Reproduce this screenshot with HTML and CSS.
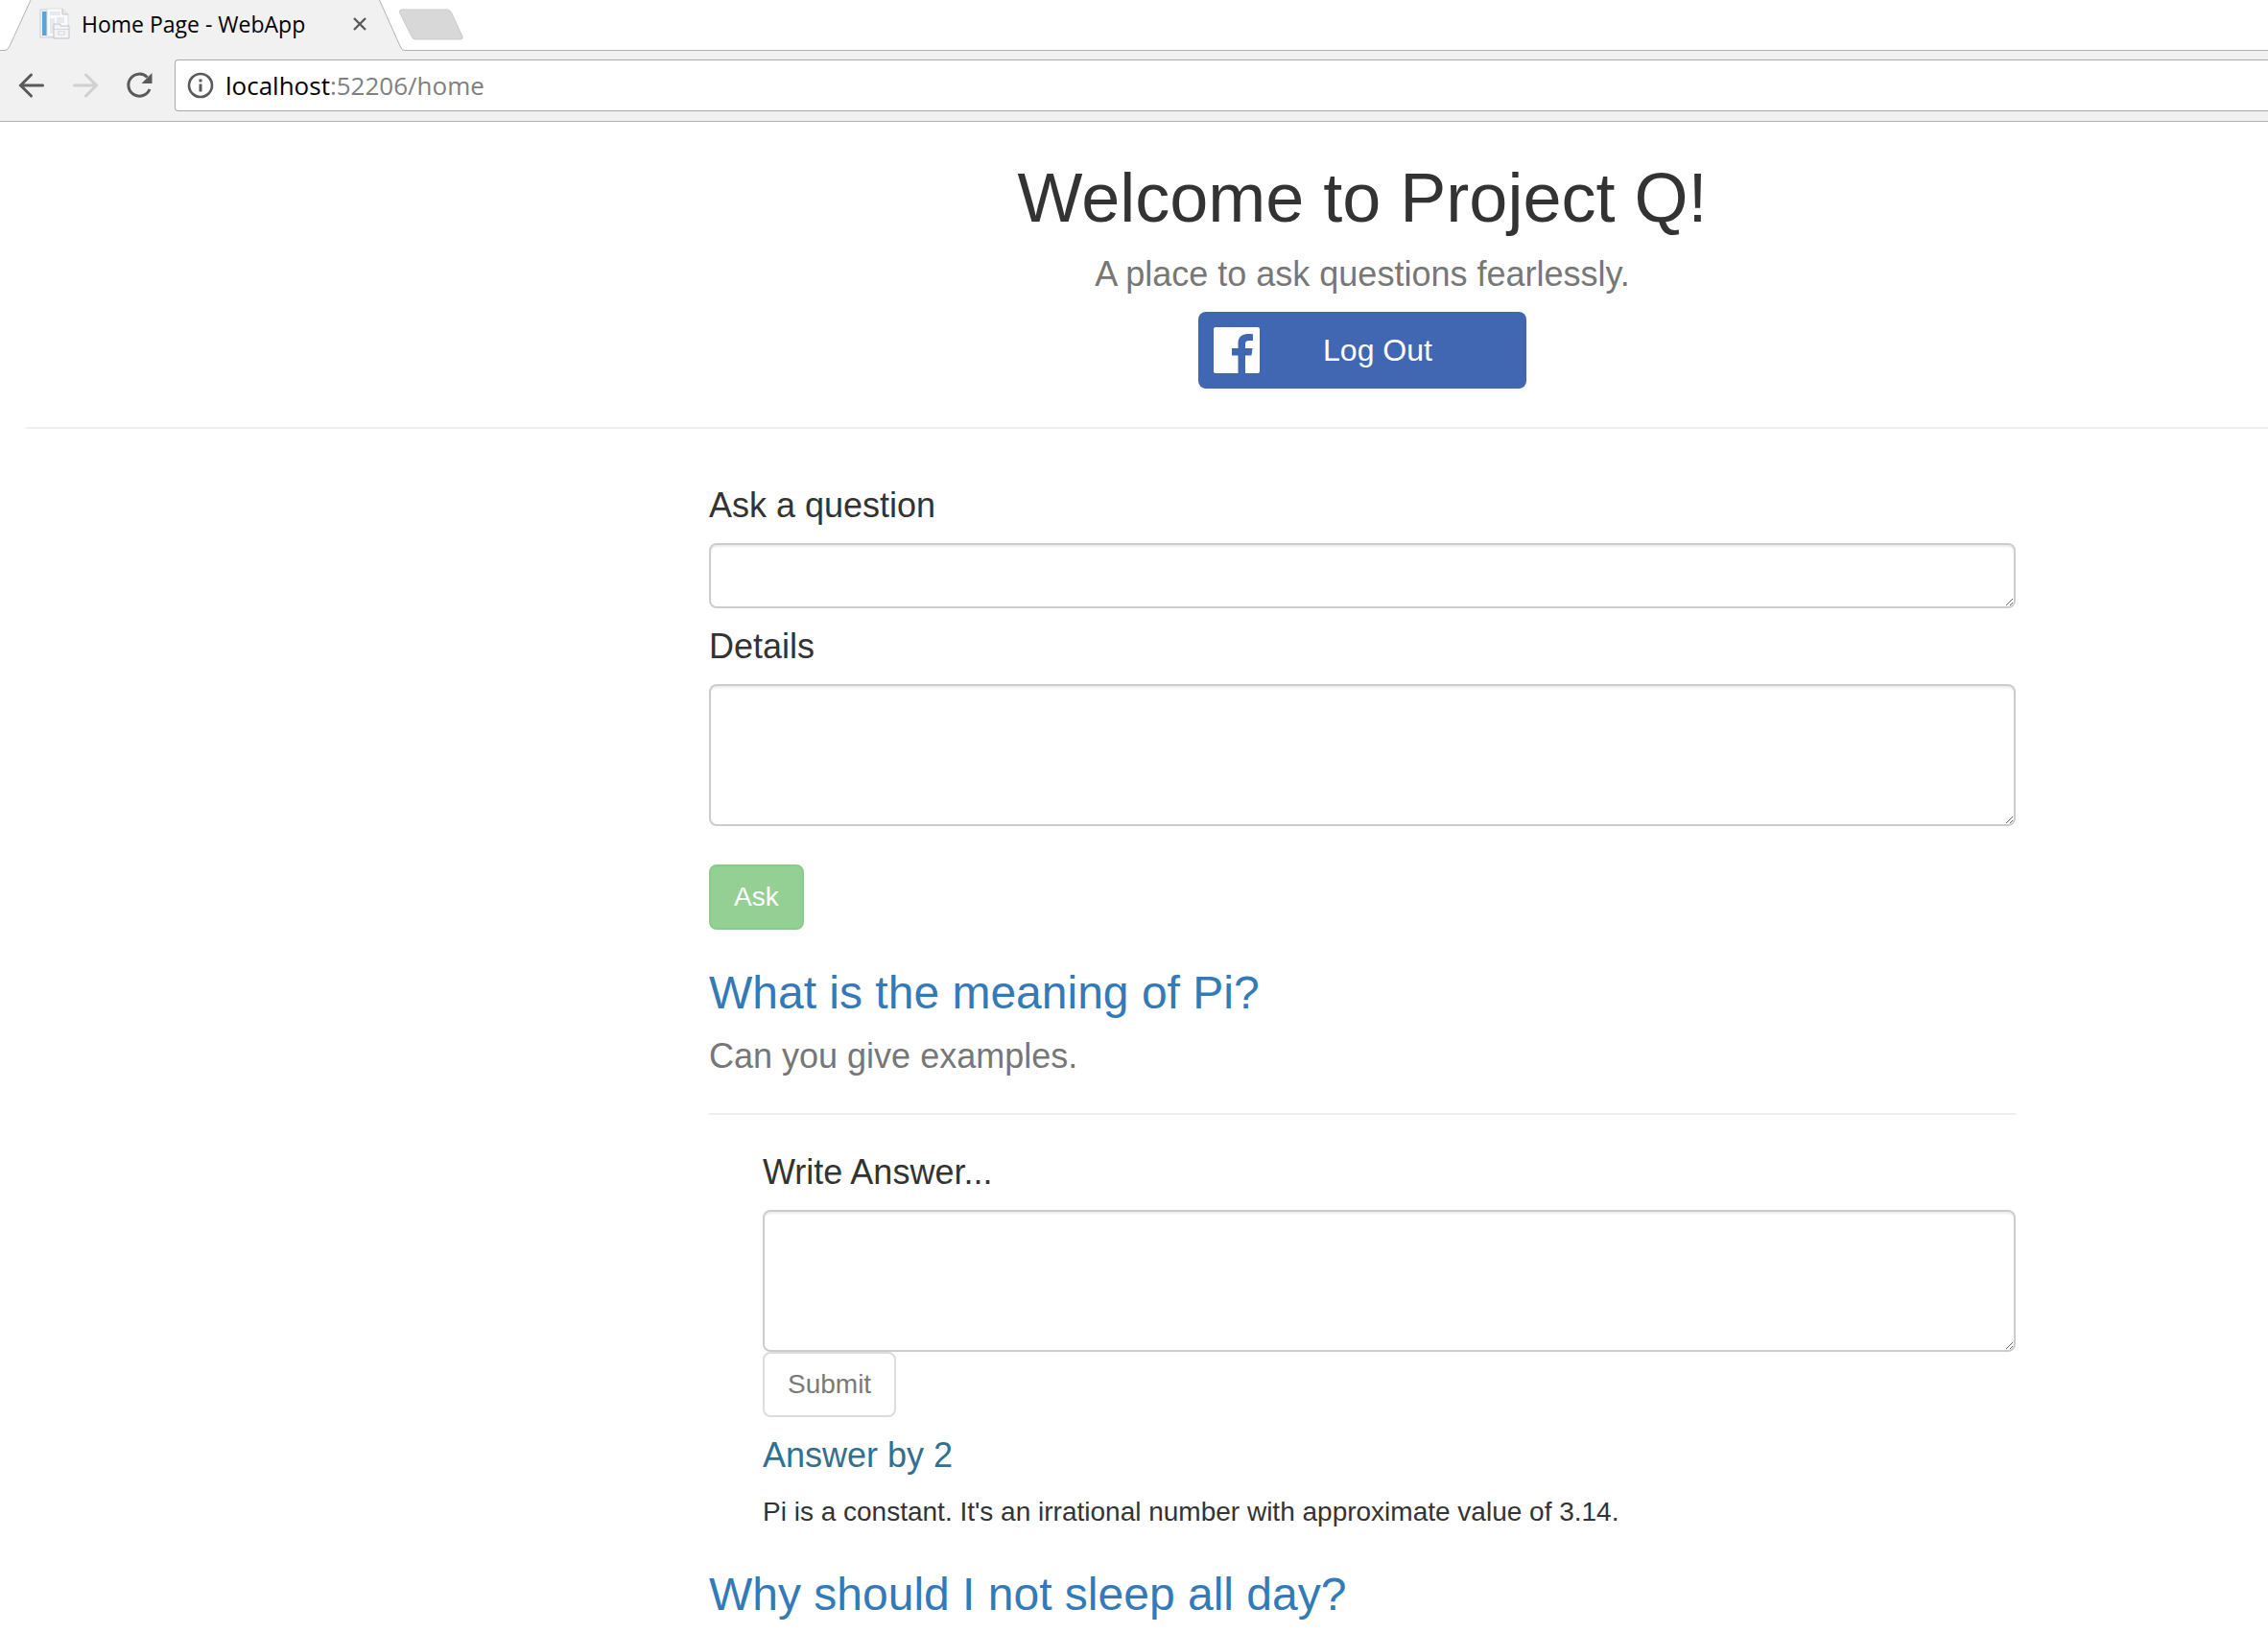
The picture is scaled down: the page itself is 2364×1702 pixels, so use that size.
FILE: index.html
```html
<!DOCTYPE html>
<html lang="en">
<head>
<meta charset="utf-8">
<title>Home Page - WebApp</title>
<link rel="stylesheet" href="styles.css">
</head>
<body>
<div class="browser">
  <div class="tab-strip">
    <svg class="tab-edge" width="34" height="53" viewBox="0 0 34 53"><path d="M0 53V52.5H5Q8 52.5 10 48L32 0H34V53Z" fill="#f1f1f1"/><path d="M0 52.5H5Q8 52.5 10 48L32 0" fill="none" stroke="#b2b2b2"/></svg>
    <div class="tab">
      <svg width="32" height="34" viewBox="0 0 32 34">
        <rect x="1" y="2" width="14" height="29" fill="#eef3f7" stroke="#c9cfd4"/>
        <rect x="3" y="4" width="5" height="25" fill="#5ba3d4"/>
        <path d="M8 1H24L30 7V30H8Z" fill="#fafbfc" stroke="#dcdfe2"/>
        <path d="M24 1V7H30" fill="#e4e7eb" stroke="#c0c4c8"/>
        <path d="M11 4H22V8H11ZM11 11H16V27H11ZM18 10H26V16H18Z" fill="#e6eaf0"/>
        <path d="M15 19V17H22V19H31V32H15Z" fill="#f3f4f6" stroke="#c0c4c9"/>
        <path d="M15 22.5H31" stroke="#d4d7db"/><rect x="20" y="25" width="6" height="3" fill="#fff" stroke="#ccd0d5"/>
      </svg>
      <span class="tab-title">Home Page - WebApp</span>
      <button class="icon-button" aria-label="Close tab"><svg width="16" height="16" viewBox="0 0 16 16"><path d="M2 2L14 14M14 2L2 14" stroke="#5a5a5a" stroke-width="2.4"/></svg></button>
    </div>
    <svg class="tab-edge" width="28" height="53" viewBox="0 0 28 53"><path d="M0 0H.5L22 48Q24 52.5 26 52.5H28V53H0Z" fill="#f1f1f1"/><path d="M.5 0L22 48Q24 52.5 26 52.5H28" fill="none" stroke="#b2b2b2"/></svg>
    <div class="tab-rest">
      <button class="icon-button" aria-label="New tab"><svg width="70" height="34" viewBox="0 0 70 34"><path d="M4 1H51Q54 1 55.5 4L67 29Q68 32 65 32H18Q15 32 14 29L1.500 4Q1 1 4 1Z" fill="#d8d8d8" stroke="#cbcbcb"/></svg></button>
    </div>
  </div>
  <div class="toolbar">
    <button class="icon-button" aria-label="Back"><svg width="28" height="28" viewBox="0 0 28 28"><path d="M25.500 14H3M13.500 3L2.500 14L13.500 25" fill="none" stroke="#5a5a5a" stroke-width="3" stroke-linecap="round"/></svg></button>
    <button class="icon-button" aria-label="Forward" disabled><svg width="28" height="28" viewBox="0 0 28 28"><path d="M2.500 14H25M14.500 3L25.500 14L14.500 25" fill="none" stroke="#d0d0d0" stroke-width="3" stroke-linecap="round"/></svg></button>
    <button class="icon-button" aria-label="Reload"><svg width="28" height="28" viewBox="0 0 28 28"><path d="M22.500 5.500A11.500 11.500 0 1 0 25 18" fill="none" stroke="#5a5a5a" stroke-width="3"/><path d="M27.500 1V12H16.500Z" fill="#5a5a5a"/></svg></button>
    <div class="address">
      <svg width="28" height="28" viewBox="0 0 28 28"><circle cx="14" cy="14" r="12" fill="none" stroke="#5a5a5a" stroke-width="2.600"/><path d="M12.500 7.500H15.500V10.500H12.500ZM12.500 12.500H15.500V20.500H12.500Z" fill="#5a5a5a"/></svg>
      <span class="url"><span class="host">localhost</span>:52206/home</span>
    </div>
  </div>
</div>

<header class="columns">
  <div class="column intro">
    <h1>Welcome to Project Q!</h1>
    <h4 class="muted">A place to ask questions fearlessly.</h4>
    <button class="facebook">
      <svg width="48" height="48" viewBox="0 0 48 48"><path d="M2 0H46Q48 0 48 2V46Q48 48 46 48H33V29.500H39.500L40.500 22H33V17.500C33 15.300 34 14 37 14H41V7.400C40 7.200 38 7 35.500 7C29.500 7 25.500 10.500 25.500 16.500V22H19V29.500H25.500V48H2Q0 48 0 46V2Q0 0 2 0Z" fill="#fff"/></svg>
      <span class="facebook-label">Log Out</span>
    </button>
  </div>
</header>
<hr class="page-rule">
<main class="columns">
  <div class="column">
    <form class="ask">
      <h4><label for="question">Ask a question</label></h4>
      <textarea id="question" class="control" rows="1"></textarea>
      <h4><label for="details">Details</label></h4>
      <textarea id="details" class="control" rows="3"></textarea>
      <button class="button success" disabled>Ask</button>
    </form>
    <article>
      <h3><a href="#pi">What is the meaning of Pi?</a></h3>
      <h4 class="muted">Can you give examples.</h4>
      <hr>
      <div class="answers">
        <form>
          <h4><label for="answer">Write Answer...</label></h4>
          <textarea id="answer" class="control" rows="3"></textarea>
          <button class="button" disabled>Submit</button>
        </form>
        <h4 class="author">Answer by 2</h4>
        <p>Pi is a constant. It's an irrational number with approximate value of 3.14.</p>
      </div>
    </article>
    <article>
      <h3><a href="#sleep">Why should I not sleep all day?</a></h3>
    </article>
  </div>
</main>
</body>
</html>
```
FILE: styles.css
```css
* { box-sizing: border-box; }
body {
  margin: 0;
  background: #fff;
  color: #333;
  font: 28px/40px "Liberation Sans", Arial, sans-serif;
}
svg { display: block; flex: none; }

/* Browser frame */
.browser {
  font-family: "Open Sans", "Noto Sans", sans-serif;
  border-bottom: 1px solid #b2b2b2;
  background: #f1f1f1;
}
.tab-strip { display: flex; height: 53px; background: #fff; }
.tab {
  display: flex;
  align-items: center;
  width: 361px;
  padding: 0 12px 3px 7px;
  background: #f1f1f1;
  color: #000;
}
.tab-title { flex: 1; margin-left: 12px; font-size: 23px; line-height: 32px; white-space: nowrap; }
.tab-rest { display: flex; flex: 1; padding-top: 9px; border-bottom: 1px solid #b2b2b2; }
.icon-button { display: block; flex: none; padding: 0; border: 0; background: none; }
.tab-rest .icon-button { align-self: flex-start; margin-left: -8px; }
.toolbar { display: flex; align-items: center; gap: 28px; padding: 9px 0 10px 19px; }
.address {
  display: flex;
  flex: 1;
  align-items: center;
  gap: 12px;
  height: 54px;
  margin-left: -5px;
  padding-left: 12px;
  border: 1px solid #a9a9a9;
  border-right: 0;
  border-radius: 4px 0 0 4px;
  background: #fff;
}
.url { font-size: 26px; color: #808080; }
.host { color: #000; }

/* Page */
.columns { display: grid; grid-template-columns: 739fr 1362fr 263fr; }
.column { grid-column: 2; min-width: 0; }
.intro { text-align: center; }
h1, h3, h4, p { margin: 0; font-weight: 400; }
h1 { margin: 40px 0 20px; font-size: 72px; line-height: 79px; }
h3 { margin: 40px 0 20px; font-size: 48px; line-height: 52px; }
h4 { margin: 20px 0; font-size: 36px; line-height: 39px; }
hr { margin: 40px 0; border: 0; border-top: 2px solid #eee; }
.page-rule { margin-left: 27px; }
a { color: #337ab7; text-decoration: none; }
.muted { color: #777; }
.author { color: #31708f; }
.ask { padding-top: 20px; }
.ask h4:first-child { margin-top: 0; }
.answers { padding-left: 56px; }
.control {
  display: block;
  width: 100%;
  padding: 12px 24px;
  border: 2px solid #ccc;
  border-radius: 8px;
  background: #fff;
  box-shadow: inset 0 2px 2px rgba(0, 0, 0, .075);
  color: #555;
  font: inherit;
}
#question { height: 68px; }
.button {
  display: block;
  padding: 12px 24px;
  border: 2px solid #ccc;
  border-radius: 8px;
  background: #fff;
  color: #333;
  font: inherit;
  opacity: .65;
}
.success { margin-top: 40px; border-color: #4cae4c; background: #5cb85c; color: #fff; }
.facebook {
  display: flex;
  align-items: center;
  width: 342px;
  height: 80px;
  margin: 0 auto;
  padding: 0 32px 0 16px;
  border: 0;
  border-radius: 8px;
  background: #4267b2;
  color: #fff;
  font: inherit;
}
.facebook-label { flex: 1; font-size: 32px; }
```
